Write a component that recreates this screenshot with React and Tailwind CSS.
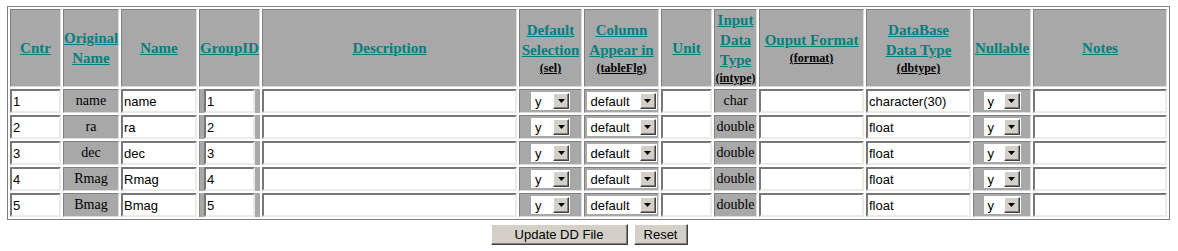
import React from "react";

const serif = "font-['Liberation_Serif',serif]";
const sans = "font-['Liberation_Sans',Arial,sans-serif]";

const cellBorder =
  "border border-t-[#808080] border-l-[#808080] border-b-[#dcdcdc] border-r-[#dcdcdc]";

const columns = [
  { w: "w-[51px]", lines: ["Cntr"] },
  { w: "w-[56px]", lines: ["Original", "Name"] },
  { w: "w-[76px]", lines: ["Name"] },
  { w: "w-[61px]", lines: ["GroupID"] },
  { w: "w-[255px]", lines: ["Description"] },
  { w: "w-[63px]", lines: ["Default", "Selection"], sub: "(sel)" },
  { w: "w-[75px]", lines: ["Column", "Appear in"], sub: "(tableFlg)" },
  { w: "w-[51px]", lines: ["Unit"] },
  { w: "w-[43px]", lines: ["Input", "Data", "Type"], sub: "(intype)" },
  { w: "w-[105px]", lines: ["Ouput Format"], sub: "(format)" },
  { w: "w-[105px]", lines: ["DataBase", "Data Type"], sub: "(dbtype)" },
  { w: "w-[58px]", lines: ["Nullable"] },
  { w: "w-[134px]", lines: ["Notes"] },
];

const rows = [
  { n: "1", orig: "name", type: "char", db: "character(30)" },
  { n: "2", orig: "ra", type: "double", db: "float" },
  { n: "3", orig: "dec", type: "double", db: "float" },
  { n: "4", orig: "Rmag", type: "double", db: "float" },
  { n: "5", orig: "Bmag", type: "double", db: "float" },
];

function TextBox({ value = "", className = "w-full" }) {
  return (
    <input
      type="text"
      defaultValue={value}
      className={`block ${className} h-[24px] border-2 border-t-[#777777] border-l-[#777777] border-b-[#ecebe6] border-r-[#ecebe6] bg-white px-px text-[13px] text-black outline-none ${sans}`}
    />
  );
}

function FakeSelect({ value, width }) {
  return (
    <div className={`mx-auto flex items-center ${width} h-[18px] bg-white text-left`}>
      <span className={`flex-1 pl-[4px] text-[13px] leading-none text-black ${sans}`}>
        {value}
      </span>
      <span className="mr-px flex h-[16px] w-[16px] items-center justify-center border border-t-white border-l-white border-b-[#404040] border-r-[#404040] bg-[#d4d0c8] shadow-[inset_-1px_-1px_0_#808080]">
        <svg width="7" height="4" viewBox="0 0 7 4">
          <path d="M0 0H7L3.5 4Z" fill="#000" />
        </svg>
      </span>
    </div>
  );
}

function Header({ col }) {
  return (
    <th
      className={`${col.w} h-[78px] bg-[#a8a8a8] ${cellBorder} p-0 text-center align-middle text-[15px] leading-[20px] ${serif}`}
    >
      <a
        href="#"
        className="block font-bold text-[#008080] underline whitespace-nowrap"
      >
        {col.lines.map((l, i) => (
          <React.Fragment key={i}>
            {i > 0 && <br />}
            {l}
          </React.Fragment>
        ))}
      </a>
      {col.sub && (
        <div className="text-[12px] font-bold leading-[16px] text-black underline whitespace-nowrap">
          {col.sub}
        </div>
      )}
    </th>
  );
}

function GrayCell({ children, className = "" }) {
  return (
    <td className={`bg-[#a8a8a8] ${cellBorder} p-0 text-center align-middle ${className}`}>
      {children}
    </td>
  );
}

export default function App() {
  return (
    <div className="w-[1178px] bg-white pb-[6px]">
      <table className="ml-[7px] mt-[6px] w-[1163px] table-fixed border-separate border-spacing-[2px] border border-[#808080]">
        <thead>
          <tr>
            {columns.map((c, i) => (
              <Header key={i} col={c} />
            ))}
          </tr>
        </thead>
        <tbody>
          {rows.map((r) => (
            <tr key={r.n}>
              <td className="p-0">
                <TextBox value={r.n} />
              </td>
              <GrayCell className={`text-[14px] font-normal leading-[20px] text-black ${serif}`}>{r.orig}</GrayCell>
              <td className="p-0">
                <TextBox value={r.orig} />
              </td>
              <td className="bg-[#a8a8a8] border-l border-l-[#8c8c8c] pl-[4px] pr-[5px]">
                <TextBox value={r.n} />
              </td>
              <td className="p-0">
                <TextBox />
              </td>
              <GrayCell>
                <FakeSelect value="y" width="w-[39px]" />
              </GrayCell>
              <GrayCell>
                <FakeSelect value="default" width="w-[70px]" />
              </GrayCell>
              <td className="p-0">
                <TextBox />
              </td>
              <GrayCell className={`text-[14px] font-normal leading-[20px] text-black ${serif}`}>{r.type}</GrayCell>
              <td className="p-0">
                <TextBox />
              </td>
              <td className="p-0">
                <TextBox value={r.db} />
              </td>
              <GrayCell>
                <FakeSelect value="y" width="w-[37px]" />
              </GrayCell>
              <td className="p-0">
                <TextBox />
              </td>
            </tr>
          ))}
        </tbody>
      </table>
      <div className="mt-[4px] flex justify-center gap-[6px]">
        <button
          type="button"
          className={`h-[21px] w-[137px] border border-t-white border-l-white border-b-[#404040] border-r-[#404040] bg-[#d4d0c8] shadow-[inset_-1px_-1px_0_#808080] text-[13px] text-black ${sans}`}
        >
          Update DD File
        </button>
        <button
          type="button"
          className={`h-[21px] w-[54px] border border-t-white border-l-white border-b-[#404040] border-r-[#404040] bg-[#d4d0c8] shadow-[inset_-1px_-1px_0_#808080] text-[13px] text-black ${sans}`}
        >
          Reset
        </button>
      </div>
    </div>
  );
}
